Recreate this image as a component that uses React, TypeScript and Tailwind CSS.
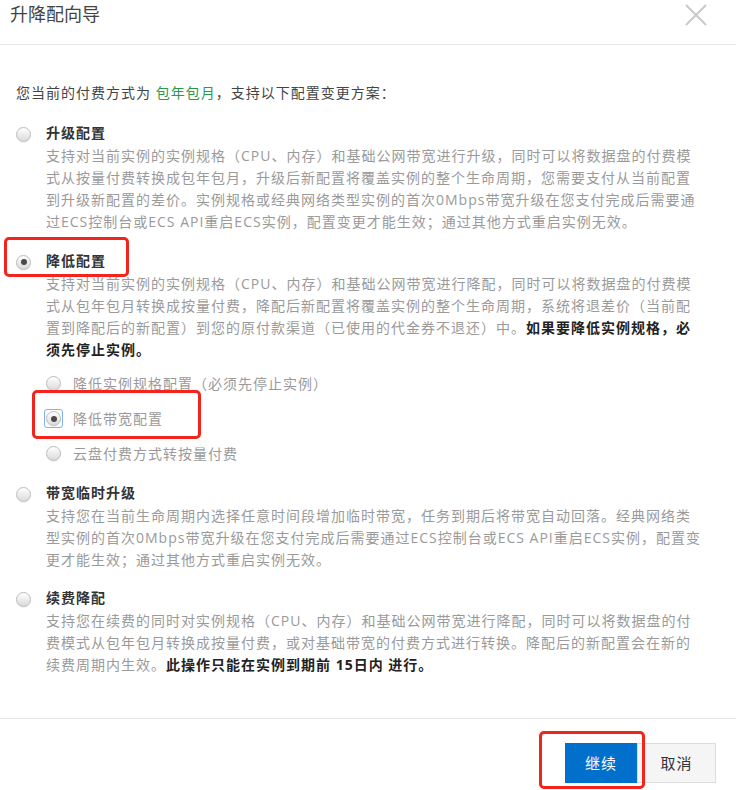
import type { ReactNode } from "react"

type Line = ReactNode

function Radio({ checked = false, focused = false }: { checked?: boolean; focused?: boolean }) {
  return (
    <span className="relative flex h-[15px] w-[15px] shrink-0 items-center justify-center rounded-full border border-[#bcbcbc] bg-linear-to-b from-white to-[#dadada] shadow-[0_1px_1px_rgba(0,0,0,0.06)]">
      {checked && <span className="h-[6px] w-[6px] rounded-full bg-[#4a4a4a]" />}
      {focused && <span className="absolute -inset-[3px] rounded-[3px] border border-[#7fb0f0]" />}
    </span>
  )
}

function Section({
  title,
  lines,
  checked = false,
  className = "",
  children,
}: {
  title: string
  lines: Line[]
  checked?: boolean
  className?: string
  children?: ReactNode
}) {
  return (
    <div className={"flex " + className}>
      <div className="flex h-[24px] w-[30px] shrink-0 items-center pt-[2px]">
        <Radio checked={checked} />
      </div>
      <div className="flex-1">
        <div className="text-[14px] leading-[24px] font-bold tracking-[1px] text-[#333]">{title}</div>
        <div className="text-[14px] leading-[22px] tracking-[1px] text-[#9a9a9a]">
          {lines.map((l, i) => (
            <div key={i} className="whitespace-nowrap">
              {l}
            </div>
          ))}
        </div>
        {children}
      </div>
    </div>
  )
}

const B = ({ children }: { children: ReactNode }) => <b className="font-bold text-[#222]">{children}</b>

export default function App() {
  const subs = ["降低实例规格配置（必须先停止实例）", "降低带宽配置", "云盘付费方式转按量付费"]

  return (
    <div className="relative flex h-[790px] w-[736px] flex-col overflow-hidden bg-white font-['Open_Sans','Noto_Sans_CJK_SC',sans-serif] text-[#333]">
      {/* header */}
      <header className="flex h-[45px] shrink-0 items-start justify-between border-b border-[#e6e6e6] pl-[10px] pr-[29px]">
        <h1 className="pt-[2px] text-[18px] leading-[24px] font-normal text-[#444]">升降配向导</h1>
        <svg className="mt-[4px]" width="22" height="22" viewBox="0 0 22 22" fill="none">
          <path d="M1 1 L21 21 M21 1 L1 21" stroke="#c9c9c9" strokeWidth="2" />
        </svg>
      </header>

      {/* body */}
      <main className="flex-1 px-[16px] pt-[37px]">
        <p className="text-[14px] leading-[22px] tracking-[1px] text-[#444]">
          您当前的付费方式为 <span className="text-[#2a9a48]">包年包月</span>，支持以下配置变更方案：
        </p>

        <Section
          className="mt-[17px]"
          title="升级配置"
          lines={[
            "支持对当前实例的实例规格（CPU、内存）和基础公网带宽进行升级，同时可以将数据盘的付费模",
            "式从按量付费转换成包年包月，升级后新配置将覆盖实例的整个生命周期，您需要支付从当前配置",
            "到升级新配置的差价。实例规格或经典网络类型实例的首次0Mbps带宽升级在您支付完成后需要通",
            "过ECS控制台或ECS API重启ECS实例，配置变更才能生效；通过其他方式重启实例无效。",
          ]}
        />

        <Section
          className="mt-[16px]"
          title="降低配置"
          checked
          lines={[
            "支持对当前实例的实例规格（CPU、内存）和基础公网带宽进行降配，同时可以将数据盘的付费模",
            "式从包年包月转换成按量付费，降配后新配置将覆盖实例的整个生命周期，系统将退差价（当前配",
            <>
              置到降配后的新配置）到您的原付款渠道（已使用的代金券不退还）中。<B>如果要降低实例规格，必</B>
            </>,
            <B>须先停止实例。</B>,
          ]}
        >
          <div className="mt-[5px]">
            {subs.map((s, i) => (
              <div key={s} className="flex h-[35px] items-center gap-[12px]">
                <Radio checked={i === 1} focused={i === 1} />
                <span className="text-[14px] tracking-[1px] text-[#9a9a9a]">{s}</span>
              </div>
            ))}
          </div>
        </Section>

        <Section
          className="mt-[10px]"
          title="带宽临时升级"
          lines={[
            "支持您在当前生命周期内选择任意时间段增加临时带宽，任务到期后将带宽自动回落。经典网络类",
            "型实例的首次0Mbps带宽升级在您支付完成后需要通过ECS控制台或ECS API重启ECS实例，配置变",
            "更才能生效；通过其他方式重启实例无效。",
          ]}
        />

        <Section
          className="mt-[15px]"
          title="续费降配"
          lines={[
            "支持您在续费的同时对实例规格（CPU、内存）和基础公网带宽进行降配，同时可以将数据盘的付",
            "费模式从包年包月转换成按量付费，或对基础带宽的付费方式进行转换。降配后的新配置会在新的",
            <>
              续费周期内生效。<B>此操作只能在实例到期前 15日内 进行。</B>
            </>,
          ]}
        />
      </main>

      {/* footer */}
      <footer className="flex h-[72px] shrink-0 items-start justify-end border-t border-[#e6e6e6] pt-[24px] pr-[20px]">
        <button className="h-[40px] w-[72px] bg-[#0070cc] text-[15px] tracking-[1px] text-white">继续</button>
        <button className="h-[40px] w-[79px] border border-[#dcdcdc] bg-[#f5f5f5] text-[15px] tracking-[1px] text-[#333]">
          取消
        </button>
      </footer>

      {/* red annotation boxes */}
      <div className="pointer-events-none absolute top-[237px] left-[4px] h-[40px] w-[125px] rounded-[5px] border-[3px] border-[#f2241b]" />
      <div className="pointer-events-none absolute top-[390px] left-[32px] h-[49px] w-[169px] rounded-[5px] border-[3px] border-[#f2241b]" />
      <div className="pointer-events-none absolute top-[731px] left-[539px] h-[58px] w-[106px] rounded-[5px] border-[3px] border-[#f2241b]" />
    </div>
  )
}
